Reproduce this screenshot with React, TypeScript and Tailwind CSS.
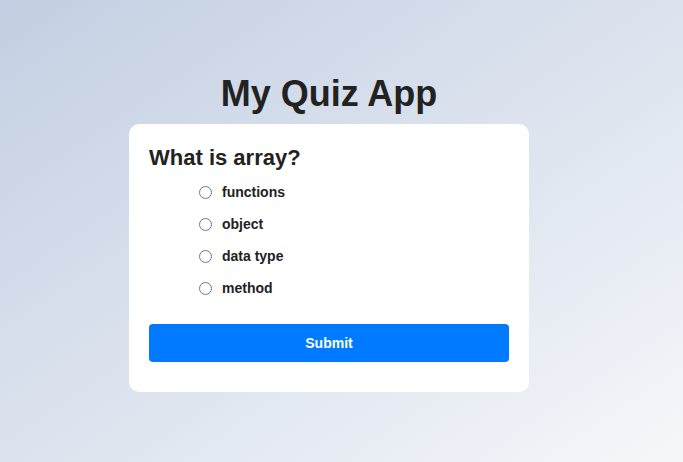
import React, { useState } from 'react';

const options = ['functions', 'object', 'data type', 'method'];

const App: React.FC = () => {
    const [picked, setPicked] = useState<string | null>(null);

    return (
        <div className="min-h-screen w-full flex items-center justify-center pr-[25px] pt-[3px] bg-linear-to-br from-[#c3cfe2] to-[#f5f7fa] font-['Liberation_Sans',Arial,sans-serif] text-[#222]">
            <div className="flex flex-col items-center">
                <h1 className="text-[36px] leading-[41px] font-bold mb-[10px]">My Quiz App</h1>

                {/* Question card */}
                <div className="w-[400px] bg-white rounded-[10px] px-5 pt-[21px] pb-[30px]">
                    <h2 className="text-[22px] leading-[25px] font-bold">What is array?</h2>
                    <ul className="mt-[6px] pl-[50px]">
                        {options.map((opt) => (
                            <li key={opt} className="h-[32px] flex items-center">
                                <label className="flex items-center cursor-pointer" onClick={() => setPicked(opt)}>
                                    <span className="w-[13px] h-[13px] rounded-full border border-[#767676] bg-white flex items-center justify-center">
                                        {picked === opt && <span className="w-[7px] h-[7px] rounded-full bg-[#0075ff]"></span>}
                                    </span>
                                    <span className="ml-[10px] text-[14px] leading-4 font-bold">{opt}</span>
                                </label>
                            </li>
                        ))}
                    </ul>
                    <button className="mt-5 w-full h-[38px] bg-[#007bff] text-white text-[14px] font-bold rounded-[4px]">
                        Submit
                    </button>
                </div>
            </div>
        </div>
    );
};

export default App;
